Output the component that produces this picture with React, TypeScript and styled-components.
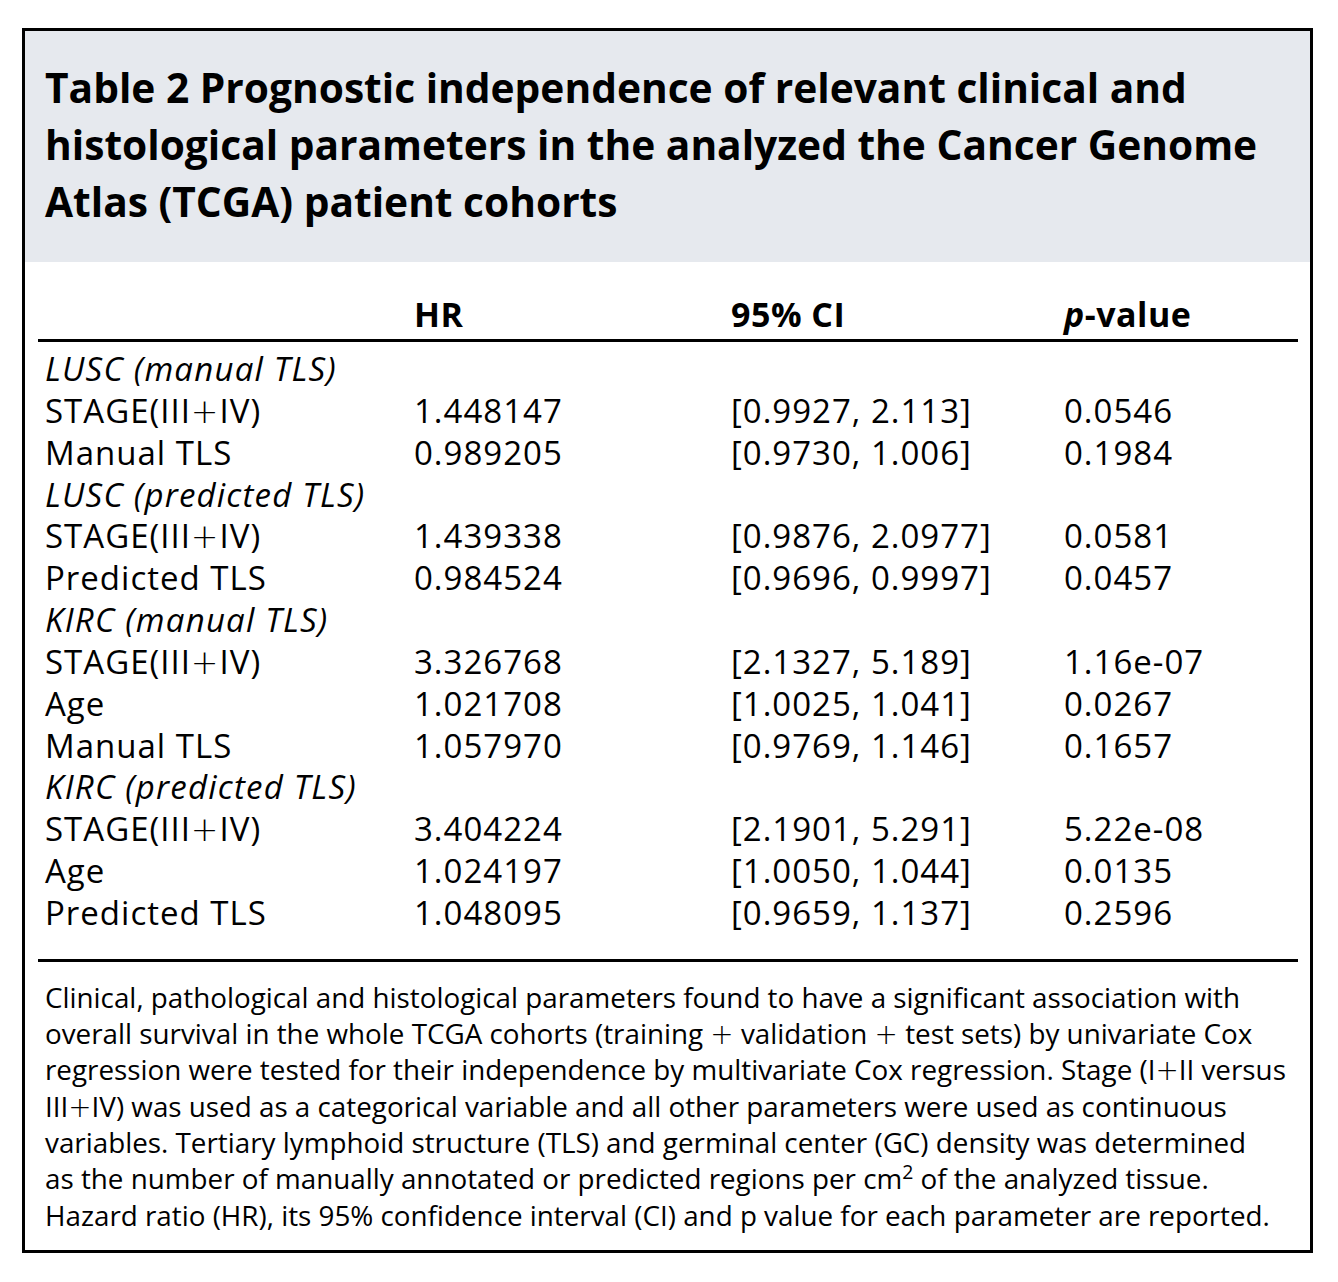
import React from 'react';
import styled, { createGlobalStyle } from 'styled-components';

const GlobalStyle = createGlobalStyle`
  html, body {
    margin: 0;
    padding: 0;
    background: #ffffff;
  }
  body {
    font-family: 'Open Sans', 'DejaVu Sans', sans-serif;
    color: #000;
  }
`;

const Frame = styled.div`
  margin: 28px 0 0 22px;
  width: 1291px;
  box-sizing: border-box;
  border: 3px solid #000;
`;

const Header = styled.div`
  background: #e6e9ee;
  padding: 28px 20px 32px 20px;
`;

const Title = styled.h1`
  margin: 0;
  font-family: 'Open Sans', sans-serif;
  font-weight: 700;
  font-size: 40.7px;
  line-height: 57px;
  white-space: nowrap;
`;

const Line = styled.span`
  display: block;
`;

const TableArea = styled.div`
  margin: 0 12px 0 13px;
  padding-top: 27px;
`;

const Grid = styled.div<{ $head?: boolean }>`
  display: grid;
  grid-template-columns: 369px 317px 333px 1fr;
  padding-left: 7px;
  font-size: ${(p) => (p.$head ? '34px' : '33px')};
  font-weight: ${(p) => (p.$head ? 700 : 400)};
  letter-spacing: ${(p) => (p.$head ? '0.5px' : '1px')};
  line-height: ${(p) => (p.$head ? '50px' : '41.85px')};
  white-space: nowrap;
`;

const HeadRow = styled(Grid)`
  border-bottom: 3px solid #000;
`;

const Body = styled.div`
  padding: 6px 0 25px;
  border-bottom: 3px solid #000;
`;

const Group = styled.div`
  padding-left: 7px;
  font-size: 33px;
  letter-spacing: 1.2px;
  line-height: 41.85px;
  font-style: italic;
`;

const Footer = styled.p`
  margin: 0;
  padding: 17px 0 17px 7px;
  font-size: 27.8px;
  line-height: 36.3px;
  white-space: nowrap;
`;

const Sup = styled.sup`
  font-size: 0.7em;
  line-height: 0;
  vertical-align: 0.5em;
`;

const Plus = styled.span`
  font-family: 'DejaVu Sans', sans-serif;
  font-weight: 300;
  line-height: 0;
`;

// renders "+" in a wider math-like glyph, as in the typeset original
const withPlus = (s: string) =>
  s.split('+').map((part, i) => (
    <React.Fragment key={i}>
      {i > 0 && <Plus>+</Plus>}
      {part}
    </React.Fragment>
  ));

type Row = [string, string, string, string];

const groups: { name: string; rows: Row[] }[] = [
  {
    name: 'LUSC (manual TLS)',
    rows: [
      ['STAGE(III+IV)', '1.448147', '[0.9927, 2.113]', '0.0546'],
      ['Manual TLS', '0.989205', '[0.9730, 1.006]', '0.1984'],
    ],
  },
  {
    name: 'LUSC (predicted TLS)',
    rows: [
      ['STAGE(III+IV)', '1.439338', '[0.9876, 2.0977]', '0.0581'],
      ['Predicted TLS', '0.984524', '[0.9696, 0.9997]', '0.0457'],
    ],
  },
  {
    name: 'KIRC (manual TLS)',
    rows: [
      ['STAGE(III+IV)', '3.326768', '[2.1327, 5.189]', '1.16e-07'],
      ['Age', '1.021708', '[1.0025, 1.041]', '0.0267'],
      ['Manual TLS', '1.057970', '[0.9769, 1.146]', '0.1657'],
    ],
  },
  {
    name: 'KIRC (predicted TLS)',
    rows: [
      ['STAGE(III+IV)', '3.404224', '[2.1901, 5.291]', '5.22e-08'],
      ['Age', '1.024197', '[1.0050, 1.044]', '0.0135'],
      ['Predicted TLS', '1.048095', '[0.9659, 1.137]', '0.2596'],
    ],
  },
];

export default function App() {
  return (
    <>
      <GlobalStyle />
      <Frame>
        <Header>
          <Title>
            <Line>Table 2 Prognostic independence of relevant clinical and</Line>
            <Line>histological parameters in the analyzed the Cancer Genome</Line>
            <Line>Atlas (TCGA) patient cohorts</Line>
          </Title>
        </Header>
        <TableArea>
          <HeadRow $head>
            <span />
            <span>HR</span>
            <span>95% CI</span>
            <span>
              <i>p</i>-value
            </span>
          </HeadRow>
          <Body>
            {groups.map((g) => (
              <React.Fragment key={g.name}>
                <Group>{g.name}</Group>
                {g.rows.map((r, i) => (
                  <Grid key={i}>
                    {r.map((c, j) => (
                      <span key={j}>{withPlus(c)}</span>
                    ))}
                  </Grid>
                ))}
              </React.Fragment>
            ))}
          </Body>
          <Footer>
            <Line>Clinical, pathological and histological parameters found to have a significant association with</Line>
            <Line>{withPlus('overall survival in the whole TCGA cohorts (training + validation + test sets) by univariate Cox')}</Line>
            <Line>{withPlus('regression were tested for their independence by multivariate Cox regression. Stage (I+II versus')}</Line>
            <Line>{withPlus('III+IV) was used as a categorical variable and all other parameters were used as continuous')}</Line>
            <Line>variables. Tertiary lymphoid structure (TLS) and germinal center (GC) density was determined</Line>
            <Line>
              as the number of manually annotated or predicted regions per cm<Sup>2</Sup> of the analyzed tissue.
            </Line>
            <Line>Hazard ratio (HR), its 95% confidence interval (CI) and p value for each parameter are reported.</Line>
          </Footer>
        </TableArea>
      </Frame>
    </>
  );
}
